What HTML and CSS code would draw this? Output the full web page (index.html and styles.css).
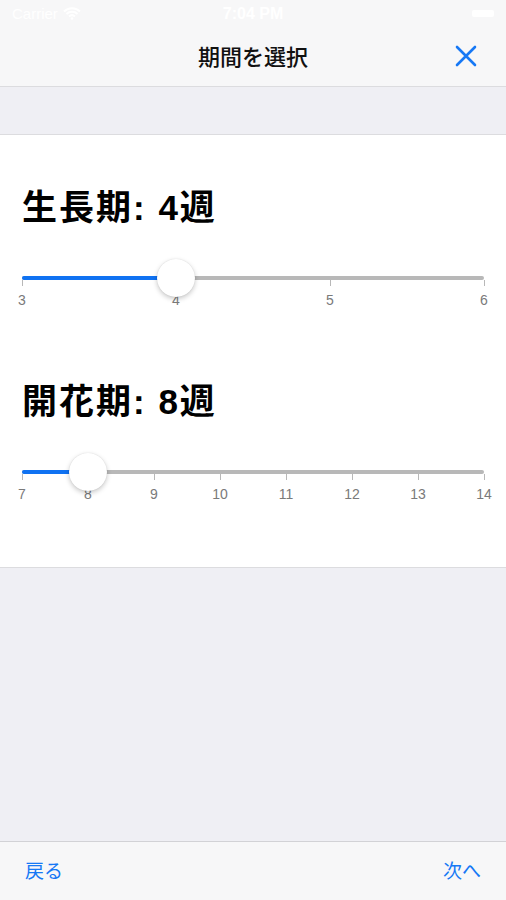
FILE: index.html
```html
<!DOCTYPE html>
<html>
    <head>
        <meta charset="utf-8">
        <title>期間を選択</title>
        <link rel="stylesheet" href="styles.css">
    </head>
    <body>
        <div id="screen">
            <div id="top">
                <div id="statusbar">
                    <span class="carrier">Carrier
                        <svg width="18" height="13" viewBox="0 0 18 13"><path d="M1 4.5a11.5 11.5 0 0 1 16 0M3.5 7a8 8 0 0 1 11 0M6 9.5a4.5 4.5 0 0 1 6 0" stroke="#fff" stroke-width="2" fill="none"/><circle cx="9" cy="11.5" r="1.3" fill="#fff"/></svg>
                    </span>
                    <span class="clock">7:04 PM</span>
                    <span class="battery"><span class="battery-level"></span></span>
                </div>
                <div id="navbar">
                    <span class="title">期間を選択</span>
                    <button class="close" type="button">
                        <svg width="22" height="22" viewBox="0 0 22 22"><path d="M2 2L20 20M20 2L2 20" stroke="#1678f5" stroke-width="2.6" stroke-linecap="round"/></svg>
                    </button>
                </div>
            </div>
            <div class="spacer"></div>
            <div id="panel">
                <h2>生長期: 4週</h2>
                <div class="slider">
                    <div class="track">
                        <div class="fill" style="width:33.333%"></div>
                        <div class="thumb" style="left:33.333%"></div>
                    </div>
                    <div class="scale">
                        <div class="mark"><span class="tick"></span><span class="num">3</span></div>
                        <div class="mark"><span class="tick"></span><span class="num">4</span></div>
                        <div class="mark"><span class="tick"></span><span class="num">5</span></div>
                        <div class="mark"><span class="tick"></span><span class="num">6</span></div>
                    </div>
                </div>
                <h2 class="second">開花期: 8週</h2>
                <div class="slider">
                    <div class="track">
                        <div class="fill" style="width:14.286%"></div>
                        <div class="thumb" style="left:14.286%"></div>
                    </div>
                    <div class="scale">
                        <div class="mark"><span class="tick"></span><span class="num">7</span></div>
                        <div class="mark"><span class="tick"></span><span class="num">8</span></div>
                        <div class="mark"><span class="tick"></span><span class="num">9</span></div>
                        <div class="mark"><span class="tick"></span><span class="num">10</span></div>
                        <div class="mark"><span class="tick"></span><span class="num">11</span></div>
                        <div class="mark"><span class="tick"></span><span class="num">12</span></div>
                        <div class="mark"><span class="tick"></span><span class="num">13</span></div>
                        <div class="mark"><span class="tick"></span><span class="num">14</span></div>
                    </div>
                </div>
            </div>
            <div class="fillarea"></div>
            <div id="toolbar">
                <button type="button">戻る</button>
                <button type="button">次へ</button>
            </div>
        </div>
    </body>
</html>
```

FILE: styles.css
```css
body{
    margin: 0;
    font-family: "Liberation Sans", "Noto Sans CJK JP", sans-serif;
    background: #efeff4;
}
#screen{
    height: 900px;
    display: flex;
    flex-direction: column;
}
#top{
    background: #f7f7f8;
    border-bottom: 1px solid #dcdcdf;
}
#statusbar{
    height: 27px;
    display: flex;
    align-items: center;
    justify-content: space-between;
    padding: 0 12px 0 12px;
    color: #fff;
    font-size: 15px;
}
.carrier{
    display: flex;
    align-items: center;
    gap: 5px;
    width: 120px;
}
.clock{
    font-weight: bold;
    font-size: 16px;
}
.battery{
    width: 120px;
    display: flex;
    justify-content: flex-end;
}
.battery-level{
    width: 22px;
    height: 7px;
    background: #fff;
    border-radius: 2px;
}
#navbar{
    height: 55px;
    padding-bottom: 4px;
    display: flex;
    align-items: center;
    justify-content: center;
    position: relative;
}
.title{
    font-size: 22px;
    color: #111;
    font-weight: 500;
}
.close{
    position: absolute;
    right: 29px;
    top: 18px;
    border: none;
    background: none;
    padding: 0;
    width: 22px;
    height: 22px;
}
.spacer{
    height: 47px;
}
#panel{
    background: #fff;
    border-top: 1px solid #dcdcdf;
    border-bottom: 1px solid #dcdcdf;
    padding: 53px 22px 65px 22px;
}
h2{
    margin: 0;
    font-size: 35px;
    line-height: 40px;
    font-weight: bold;
    letter-spacing: 2px;
    color: #000;
}
h2.second{
    margin-top: 74px;
}
.slider{
    margin-top: 48px;
}
.track{
    position: relative;
    height: 4px;
    background: #b8b8b8;
    border-radius: 2px;
}
.fill{
    height: 4px;
    background: #0f72f2;
    border-radius: 2px;
}
.thumb{
    position: absolute;
    top: -17px;
    width: 38px;
    height: 38px;
    margin-left: -19px;
    border-radius: 50%;
    background: #fff;
    box-shadow: 0 2px 5px rgba(0,0,0,0.22), 0 0 1px rgba(0,0,0,0.15);
}
.scale{
    display: flex;
    justify-content: space-between;
}
.mark{
    width: 0;
    display: flex;
    flex-direction: column;
    align-items: center;
}
.tick{
    width: 1px;
    height: 6px;
    background: #b8b8b8;
}
.num{
    margin-top: 6px;
    font-size: 14px;
    line-height: 16px;
    color: #7a7a7a;
}
.fillarea{
    flex: 1;
}
#toolbar{
    height: 55px;
    padding: 0 25px 3px 25px;
    background: #f7f7f8;
    border-top: 1px solid #d2d2d6;
    display: flex;
    align-items: center;
    justify-content: space-between;
}
#toolbar button{
    border: none;
    background: none;
    padding: 0;
    font-family: "Noto Sans CJK JP", sans-serif;
    font-size: 19px;
    color: #1678f5;
}
```
